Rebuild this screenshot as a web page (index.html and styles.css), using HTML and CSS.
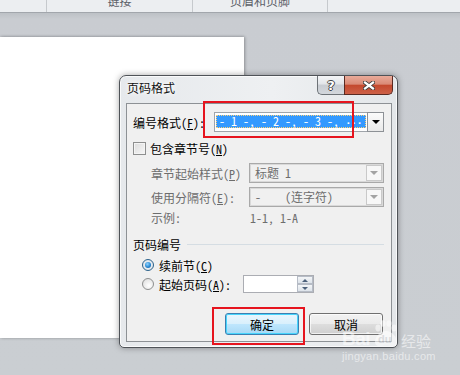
FILE: index.html
```html
<!DOCTYPE html>
<html>
<head>
<meta charset="utf-8">
<link rel="stylesheet" href="styles.css">
</head>
<body>
<div class="ribbon">
  <div class="cell c1"></div>
  <div class="cell c2"><span class="rtext">链接</span></div>
  <div class="cell c3"><span class="rtext">页眉和页脚</span></div>
  <div class="cell c4"></div>
</div>
<div class="workspace">
  <div class="page"></div>
</div>

<div class="dialog">
  <div class="titlebar">
    <span class="title">页码格式</span>
    <div class="caps">
      <div class="cap help">?</div>
      <div class="cap close">
        <svg width="12" height="9" viewBox="0 0 12 9"><path d="M2 1.5 L10 7.5 M10 1.5 L2 7.5" stroke="#3a3a3a" stroke-width="4" stroke-linecap="square"/><path d="M2 1.5 L10 7.5 M10 1.5 L2 7.5" stroke="#fff" stroke-width="2.2" stroke-linecap="square"/></svg>
      </div>
    </div>
  </div>
  <div class="content">
    <div class="row r-format">
      <span class="lbl">编号格式(<u>F</u>):</span>
      <div class="combo active">
        <div class="val"><span class="sel">- 1 -, - 2 -, - 3 -, <span class="dots">···</span></span></div>
        <div class="drop"><i class="arrow"></i></div>
      </div>
    </div>
    <div class="row r-check">
      <span class="check"></span><span class="cl">包含章节号(<u>N</u>)</span>
    </div>
    <div class="row r-style dis">
      <span class="lbl">章节起始样式(<u>P</u>)</span>
      <div class="combo disabled"><div class="val">标题 1</div><div class="drop"><i class="arrow"></i></div></div>
    </div>
    <div class="row r-sep dis">
      <span class="lbl">使用分隔符(<u>E</u>):</span>
      <div class="combo disabled"><div class="val">-&nbsp;&nbsp;&nbsp;&nbsp;(连字符)</div><div class="drop"><i class="arrow"></i></div></div>
    </div>
    <div class="row r-ex dis">
      <span class="exl">示例:</span><span>1-1, 1-A</span>
    </div>
    <div class="row r-group">
      <span>页码编号</span><span class="rule"></span>
    </div>
    <div class="row r-radio1">
      <span class="radio on"></span><span class="rl">续前节(<u>C</u>)</span>
    </div>
    <div class="row r-radio2">
      <span class="radio"></span><span class="rl rl2">起始页码(<u>A</u>):</span>
      <div class="spin">
        <div class="spinbtns"><span class="sb up"></span><span class="sb down"></span></div>
      </div>
    </div>
    <div class="row r-btns">
      <div class="btn default">确定</div>
      <div class="btn">取消</div>
    </div>
  </div>
</div>

<div class="mark red1"></div>
<div class="mark red2"></div>

<div class="watermark">
  <div class="logo">
    <span class="bai">Bai</span>
    <span class="paw">
      <svg width="26" height="28" viewBox="0 0 26 28">
        <ellipse cx="5" cy="8" rx="2.6" ry="3.4" fill="#fff"/>
        <ellipse cx="10" cy="3.5" rx="2.6" ry="3.2" fill="#fff"/>
        <ellipse cx="16" cy="3.5" rx="2.6" ry="3.2" fill="#fff"/>
        <ellipse cx="21" cy="8" rx="2.6" ry="3.4" fill="#fff"/>
        <path d="M13 11 C7 11 2 17 2 22 C2 26 6 27 9 26 C11 25.5 15 25.5 17 26 C20 27 24 26 24 22 C24 17 19 11 13 11 Z" fill="#fff"/>
      </svg>
      <span class="du">du</span>
    </span>
    <span class="jy">经验</span>
  </div>
  <div class="domain">jingyan.baidu.com</div>
</div>
</body>
</html>
```

FILE: styles.css
```css
html, body {
  margin: 0;
  padding: 0;
}
body {
  width: 460px;
  height: 375px;
  overflow: hidden;
  position: relative;
  background: #c9ccd1;
  font-family: "Noto Sans Mono CJK SC", "Noto Sans CJK SC", sans-serif;
  font-size: 12px;
  color: #000;
}
u { text-decoration: underline; }

/* ribbon */
.ribbon {
  display: flex;
  height: 12px;
  background: #eceef1;
  border-bottom: 1px solid #a2a6ac;
  overflow: hidden;
}
.cell {
  height: 12px;
  border-right: 1px solid #c6c9cd;
  display: flex;
  justify-content: center;
  align-items: flex-start;
  overflow: hidden;
}
.c1 { width: 46px; }
.c2 { width: 145px; }
.c3 { width: 134px; }
.c4 { flex: 1; border-right: none; }
.rtext {
  display: block;
  line-height: 13px;
  margin-top: -6px;
  color: #5c6068;
  font-family: "Noto Sans CJK SC", sans-serif;
}

/* workspace */
.workspace {
  height: 362px;
  padding-top: 24px;
  box-sizing: border-box;
  background: linear-gradient(#bdc1c6 0px, #c9ccd1 6px, #caced2 100%);
}
.page {
  width: 244px;
  height: 301px;
  background: #fff;
  box-shadow: 1px 0 3px rgba(0,0,0,0.28), 0 -1px 2px rgba(0,0,0,0.08);
}

/* dialog */
.dialog {
  position: absolute;
  left: 119px;
  top: 75px;
  width: 279px;
  height: 273px;
  box-sizing: border-box;
  border: 1px solid #4f5358;
  border-radius: 7px 7px 5px 5px;
  background: linear-gradient(to right, #e6e9ec 0%, #eef0f2 55%, #e3e6e9 100%);
  box-shadow: 0 0 6px rgba(0,0,0,0.35), inset 0 0 0 1px rgba(255,255,255,0.75);
  padding: 0 5px 5px 6px;
  display: flex;
  flex-direction: column;
}
.titlebar {
  height: 27px;
  display: flex;
  align-items: flex-start;
  flex: none;
}
.title {
  margin-left: 1px;
  margin-top: 5px;
  line-height: 14px;
  font-family: "Noto Sans CJK SC", sans-serif;
  color: #111;
  text-shadow: 0 0 4px #fff, 0 0 6px #fff;
}
.caps {
  margin-left: auto;
  margin-right: -1px;
  display: flex;
  height: 19px;
}
.cap {
  height: 19px;
  box-sizing: border-box;
  display: flex;
  align-items: center;
  justify-content: center;
}
.help {
  width: 27px;
  border: 1px solid #6d7277;
  border-top: none;
  border-right: none;
  border-radius: 0 0 0 5px;
  background: linear-gradient(#f4f5f7 0%, #e2e5e9 45%, #c8ccd2 50%, #d3d7dc 100%);
  color: #fff;
  font-family: "DejaVu Sans", sans-serif;
  font-weight: bold;
  font-size: 13px;
  line-height: 19px;
  text-shadow: 1px 0 0 #444, -1px 0 0 #444, 0 1px 0 #444, 0 -1px 0 #444;
}
.close {
  width: 49px;
  border: 1px solid #5a2a22;
  border-top: none;
  border-radius: 0 0 5px 0;
  background: linear-gradient(#e9ab9a 0%, #da8a76 45%, #c4492e 52%, #cd6148 100%);
}

.content {
  flex: 1;
  border: 1px solid #8d9195;
  background: #f0f0f0;
  padding: 0 7px 0 6px;
  display: flex;
  flex-direction: column;
}
.row {
  display: flex;
  align-items: center;
  flex: none;
}
.dis { color: #6d6d6d; }

.r-format { margin-top: 8px; height: 20px; }
.combo {
  margin-left: auto;
  box-sizing: border-box;
  height: 20px;
  display: flex;
  align-items: stretch;
}
.combo.active {
  width: 170px;
  border: 1px solid #9fa4aa;
  background: #fff;
}
.combo.active .val {
  flex: 1;
  padding: 2px 0 0 1px;
}
.sel {
  display: block;
  width: 150px;
  height: 13px;
  box-sizing: border-box;
  background: #3399ff;
  color: #fff;
  line-height: 12px;
  padding-left: 3px;
  outline: 1px dotted #ffd27a;
  outline-offset: -1px;
  white-space: nowrap;
}
.dots {
  font-family: "Liberation Mono", monospace;
  font-size: 11px;
  font-weight: bold;
  letter-spacing: -1px;
}
.combo .drop {
  width: 17px;
  box-sizing: border-box;
  border: 1px solid #b9bcc0;
  background: linear-gradient(#fbfbfb, #e9e9e9);
  display: flex;
  align-items: center;
  justify-content: center;
}
.combo.active .drop { margin: -1px -1px -1px 0; border-color: #8d9196; }
.arrow {
  width: 0;
  height: 0;
  border-left: 4px solid transparent;
  border-right: 4px solid transparent;
  border-top: 4px solid #000;
}
.combo.disabled {
  width: 135px;
  border: 1px solid #a9a9a9;
  box-shadow: inset 0 0 0 1px #d9d9d9;
  background: #f0f0f0;
  color: #6d6d6d;
}
.combo.disabled .val {
  flex: 1;
  padding-left: 5px;
  line-height: 18px;
  white-space: pre;
}
.combo.disabled .drop {
  margin: 1px;
  width: 16px;
  border-color: #c9c9c9;
  background: #f7f7f7;
}
.combo.disabled .arrow { border-top-color: #a3a3a3; }

.r-check { margin-top: 8px; height: 16px; }
.check {
  width: 13px;
  height: 13px;
  box-sizing: border-box;
  border: 1px solid #8e8f8f;
  background: linear-gradient(135deg, #dcdcdc, #f7f7f7);
  box-shadow: inset 0 0 0 1px #f4f4f4;
}
.cl { margin-left: 4px; }

.r-style { margin-top: 7px; height: 20px; padding-left: 18px; }
.r-sep { margin-top: 4px; height: 20px; padding-left: 18px; }
.r-ex { margin-top: 3px; height: 14px; padding-left: 18px; }
.exl { width: 99px; }

.r-group { margin-top: 13px; height: 14px; }
.rule {
  flex: 1;
  height: 1px;
  background: #d5dde3;
  margin-left: 6px;
}

.r-radio1 { margin-top: 7px; height: 14px; padding-left: 9px; }
.r-radio2 { margin-top: 2px; height: 20px; padding-left: 9px; }
.radio {
  width: 12px;
  height: 12px;
  box-sizing: border-box;
  border-radius: 50%;
  border: 1px solid #8e8f8f;
  background: radial-gradient(circle at 60% 65%, #ffffff 0%, #e9e9e9 60%, #d2d2d2 100%);
  display: flex;
  align-items: center;
  justify-content: center;
}
.radio.on {
  border-color: #2c628b;
  background: radial-gradient(circle, #f6f8fa 0%, #d9dfe5 100%);
}
.radio.on::after {
  content: "";
  width: 6px;
  height: 6px;
  border-radius: 50%;
  background: radial-gradient(circle at 40% 35%, #8fd3ff 0%, #2a8ad4 55%, #0e4f95 100%);
}
.rl { margin-left: 5px; }
.rl2 { width: 84px; }
.spin {
  width: 71px;
  height: 18px;
  box-sizing: border-box;
  border: 1px solid #abadb3;
  background: #fff;
  display: flex;
  justify-content: flex-end;
}
.spinbtns {
  width: 16px;
  display: flex;
  flex-direction: column;
}
.sb {
  flex: 1;
  box-sizing: border-box;
  border: 1px solid #b6bcc6;
  background: linear-gradient(#f4f6f8, #dde3ea);
  display: flex;
  align-items: center;
  justify-content: center;
}
.sb.up::after {
  content: "";
  border-left: 3px solid transparent;
  border-right: 3px solid transparent;
  border-bottom: 3px solid #4c607a;
}
.sb.down::after {
  content: "";
  border-left: 3px solid transparent;
  border-right: 3px solid transparent;
  border-top: 3px solid #4c607a;
}

.r-btns { margin-top: 19px; height: 22px; }
.btn {
  width: 74px;
  height: 22px;
  box-sizing: border-box;
  border: 1px solid #707070;
  border-radius: 3px;
  background: linear-gradient(#f2f2f2 0%, #ebebeb 48%, #dddddd 52%, #cfcfcf 100%);
  box-shadow: inset 0 0 0 1px rgba(255,255,255,0.7);
  display: flex;
  align-items: center;
  justify-content: center;
  font-family: "Noto Sans CJK SC", sans-serif;
}
.btn.default {
  margin-left: 92px;
  border-color: #3c7fb1;
  background: linear-gradient(#eaf6fd 0%, #d9f0fc 48%, #bee6fd 52%, #a7d9f5 100%);
  box-shadow: inset 0 0 0 1px #48d5fc;
}
.btn + .btn { margin-left: 10px; }

/* annotations */
.mark {
  position: absolute;
  box-sizing: border-box;
  border: 2px solid #e6141e;
}
.red1 { left: 203px; top: 101px; width: 151px; height: 37px; }
.red2 { left: 212px; top: 307px; width: 93px; height: 38px; }

/* watermark */
.watermark {
  position: absolute;
  left: 342px;
  top: 318px;
  opacity: 0.55;
  color: #fff;
}
.logo {
  display: flex;
  align-items: flex-end;
  height: 30px;
}
.bai {
  font-family: "Liberation Sans", sans-serif;
  font-weight: bold;
  font-size: 19px;
  line-height: 19px;
  letter-spacing: -0.5px;
}
.paw {
  position: relative;
  width: 26px;
  height: 28px;
  margin-left: 3px;
}
.paw svg { display: block; }
.du {
  position: absolute;
  left: 5px;
  top: 14px;
  font-family: "Liberation Sans", sans-serif;
  font-weight: bold;
  font-size: 11px;
  line-height: 11px;
  color: #c9ccd1;
}
.jy {
  font-family: "Noto Sans CJK SC", sans-serif;
  font-size: 15px;
  line-height: 15px;
  margin-left: 2px;
}
.domain {
  font-family: "Liberation Sans", sans-serif;
  font-size: 11px;
  line-height: 12px;
  margin-top: 2px;
  letter-spacing: 0.3px;
}
```
